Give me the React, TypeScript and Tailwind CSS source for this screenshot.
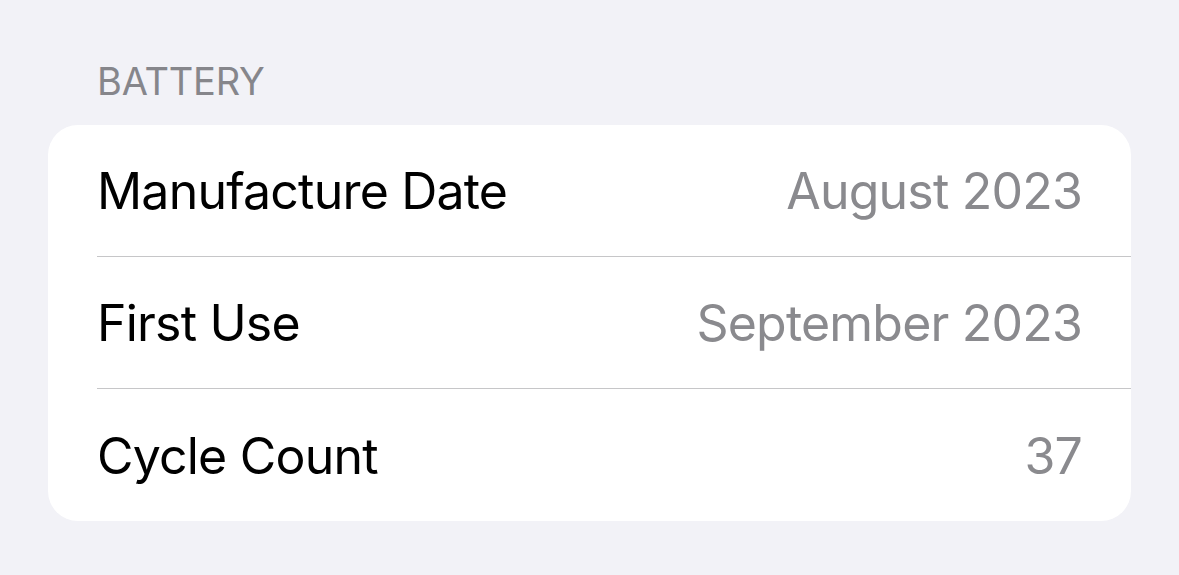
const rows = [
  { label: "Manufacture Date", value: "August 2023" },
  { label: "First Use", value: "September 2023" },
  { label: "Cycle Count", value: "37" },
];

export default function App() {
  return (
    <div className="min-h-[575px] w-full bg-[#f2f2f7] px-12 pt-[62px] font-['Inter','Noto_Sans',sans-serif]">
      <h2 className="pl-[49px] text-[38px] leading-[38px] tracking-[-0.2px] text-[#86868b]">
        BATTERY
      </h2>
      <div className="mt-[25px] overflow-hidden rounded-[30px] bg-white">
        {rows.map((row, i) => (
          <div key={row.label} className="pl-[49px]">
            <div
              className={
                "flex h-[132px] items-center justify-between pt-[2px] pr-[49px] " +
                (i < rows.length - 1 ? "border-b border-[#c6c6c8]" : "")
              }
            >
              <span className="text-[50px] tracking-[-0.8px] text-black">{row.label}</span>
              <span className="text-[50px] tracking-[-0.8px] text-[#8a8a8e]">{row.value}</span>
            </div>
          </div>
        ))}
      </div>
    </div>
  );
}
